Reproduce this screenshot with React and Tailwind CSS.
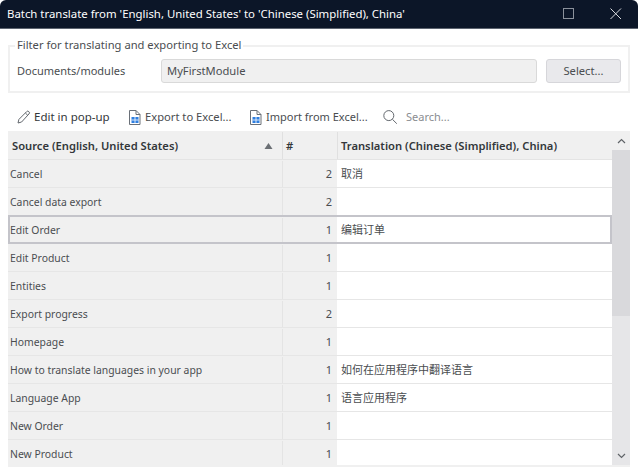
const rows = [
  ["Cancel", 2, "取消"],
  ["Cancel data export", 2, ""],
  ["Edit Order", 1, "编辑订单", true],
  ["Edit Product", 1, ""],
  ["Entities", 1, ""],
  ["Export progress", 2, ""],
  ["Homepage", 1, ""],
  ["How to translate languages in your app", 1, "如何在应用程序中翻译语言"],
  ["Language App", 1, "语言应用程序"],
  ["New Order", 1, ""],
  ["New Product", 1, ""],
];

function SheetIcon() {
  return (
    <svg width="12" height="15" viewBox="0 0 12 15" className="shrink-0">
      <path d="M.5 .5h6.5L11 4.5v10H.5z" fill="#fff" stroke="#6a7078" />
      <path d="M7 .5v4h4" fill="none" stroke="#6a7078" />
      <rect x="2.5" y="7" width="7" height="6" fill="#2f7fe0" />
      <path d="M2.5 10h7M6 7v6" stroke="#fff" strokeWidth="0.8" />
    </svg>
  );
}

export default function App() {
  return (
    <div className="w-[638px] h-[469px] overflow-hidden bg-white text-[#4a4d50] text-[11.2px] font-['Noto_Sans','Noto_Sans_CJK_SC',sans-serif]">
      <div className="h-[29px] bg-[#0c1628] border-b border-[#5d6470] rounded-t-[6px] flex items-center pl-[7px] text-white text-[11.4px]">
        <span className="flex-1 whitespace-nowrap -mt-[1px]">Batch translate from 'English, United States' to 'Chinese (Simplified), China'</span>
        <svg width="12" height="12" viewBox="0 0 12 12" className="mr-[35px] -mt-[1px]">
          <rect x="0.5" y="0.5" width="10" height="10" fill="none" stroke="#8b919b" />
        </svg>
        <svg width="12" height="12" viewBox="0 0 12 12" className="mr-[16px] -mt-[1px]">
          <path d="M.5 .5l10.5 10.5M11 .5L.5 11" stroke="#d8dade" strokeWidth="1" />
        </svg>
      </div>

      <div className="relative mx-2 mt-[16px] h-[48px] border-2 border-[#f0f0f0] flex items-center gap-[9px] pl-[7px] pr-[7px] pt-[4px]">
        <span className="absolute left-[5px] -top-[10px] bg-white px-[2px] text-[11.2px] leading-[16px] whitespace-nowrap">Filter for translating and exporting to Excel</span>
        <span className="w-[135px] shrink-0 whitespace-nowrap text-[11px]">Documents/modules</span>
        <div className="flex-1 h-[24px] bg-[#f0f0f0] border border-[#d9d9d9] rounded-[3px] flex items-center pl-[5px]">MyFirstModule</div>
        <div className="w-[75px] h-[24px] bg-[#e9e9ec] border border-[#d6d6da] rounded-[3px] flex items-center justify-center">Select...</div>
      </div>

      <div className="h-[38px] flex items-center pl-[17px] pt-[10px] whitespace-nowrap">
        <svg width="14" height="14" viewBox="0 0 14 14" className="mr-[3px]">
          <path d="M1 13l.9-3.6L9.6 1.7a1.5 1.5 0 0 1 2.3 0 1.5 1.5 0 0 1 0 2.3L4.6 12z M8.4 3l2.4 2.4" fill="none" stroke="#63686e" strokeWidth="1" />
        </svg>
        <span className="text-[#33373a] w-[76px] text-[11.5px]">Edit in pop-up</span>
        <span className="ml-[19px] mr-[4px] flex"><SheetIcon /></span>
        <span className="w-[86px]">Export to Excel...</span>
        <span className="ml-[19px] mr-[4px] flex"><SheetIcon /></span>
        <span className="w-[102px] text-[11px]">Import from Excel...</span>
        <svg width="16" height="16" viewBox="0 0 16 16" className="ml-[14px]">
          <circle cx="6.8" cy="6.6" r="5" fill="none" stroke="#63686e" />
          <path d="M10.4 10.3l4.4 4.4" stroke="#63686e" />
        </svg>
        <span className="ml-[8px] text-[#8a8d91] text-[11px]">Search...</span>
      </div>

      <div className="mx-2 h-[336px] border-t border-b-2 border-[#f0f0f0] flex overflow-hidden">
        <div className="flex-1 min-w-0">
          <div className="h-[28px] flex bg-[#f0f0f0] border-b border-[#e4e4e4] font-semibold text-[#33373a]">
            <div className="w-[275px] border-r border-[#e0e0e0] pl-1 pr-[6px] pt-[1px] flex items-center justify-between">
              <span>Source (English, United States)</span>
              <svg width="9" height="6" viewBox="0 0 9 6" className="mr-[3px]"><path d="M0.5 6L4.5 0l4 6z" fill="#6b6f74" /></svg>
            </div>
            <div className="w-[54px] pl-[3px] pt-[1px] flex items-center">#</div>
            <div className="flex-1 pl-[3px] pt-[1px] flex items-center border-l border-[#e0e0e0]">Translation (Chinese (Simplified), China)</div>
          </div>
          {rows.map(([source, count, target, selected]) => (
            <div key={source} className={selected ? "h-[29px] -mt-[1px] pt-[1px] flex border-2 border-[#c4c4ca] bg-[#f0f0f0] text-[10.4px]" : "h-[28px] pt-[1px] flex border-b border-[#e6e6e6] bg-[#f0f0f0] text-[10.4px]"}>
              <div className={selected ? "w-[273px] border-r border-[#e4e4e4] pt-[1px] flex items-center" : "w-[275px] border-r border-[#e4e4e4] pl-[2px] pt-[1px] flex items-center"}>{source}</div>
              <div className="w-[54px] pr-[5px] flex items-center justify-end text-[11px]">{count}</div>
              <div className="flex-1 bg-white pl-[4px] -mt-[1px] pt-[1px] flex items-center text-[11px]">{target}</div>
            </div>
          ))}
        </div>
        <div className="w-[18px] bg-[#e6e6e8] flex flex-col">
          <div className="h-[18px] bg-[#f0f0f0] flex items-center justify-center">
            <svg width="9" height="6" viewBox="0 0 9 6"><path d="M1 5l3.5-3.5L8 5" fill="none" stroke="#606468" strokeWidth="1.2" /></svg>
          </div>
          <div className="h-[166px] bg-[#d9d9dc]" />
          <div className="flex-1" />
          <div className="h-[18px] flex items-center justify-center">
            <svg width="9" height="6" viewBox="0 0 9 6"><path d="M1 1l3.5 3.5L8 1" fill="none" stroke="#606468" strokeWidth="1.2" /></svg>
          </div>
        </div>
      </div>
    </div>
  );
}
